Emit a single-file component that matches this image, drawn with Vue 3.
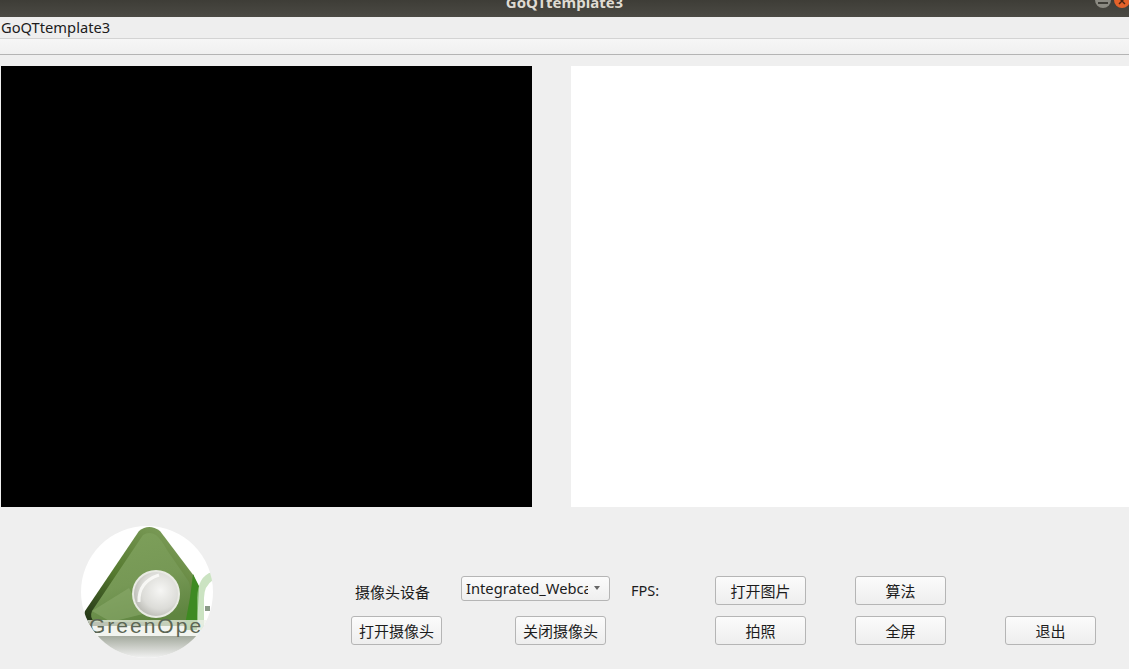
<script setup>
const cjk = '"Noto Sans", "Noto Sans CJK SC", sans-serif'
</script>

<template>
  <div class="window" :style="{ fontFamily: cjk }">
    <header class="titlebar">
      <span class="title">GoQTtemplate3</span>
      <div class="winbtns">
        <span class="winbtn min"><i></i></span>
        <span class="winbtn close">
          <svg width="16" height="16" viewBox="0 0 16 16"><path d="M5 6 L11 12 M11 6 L5 12" stroke="#4a2412" stroke-width="1.4" fill="none" /></svg>
        </span>
      </div>
    </header>
    <nav class="menubar"><span>GoQTtemplate3</span></nav>
    <div class="toolbar"></div>

    <section class="views">
      <div class="camera"></div>
      <div class="picture"></div>
    </section>

    <section class="bottom">
      <svg class="logo" width="132" height="132" viewBox="0 0 132 132">
        <defs>
          <clipPath id="circ"><circle cx="66" cy="66" r="66" /></clipPath>
          <linearGradient id="edge" x1="0.8" y1="0" x2="0" y2="1">
            <stop offset="0" stop-color="#7f9f5c" />
            <stop offset="0.55" stop-color="#55792f" />
            <stop offset="1" stop-color="#1f2f14" />
          </linearGradient>
          <linearGradient id="tri" x1="0.3" y1="0" x2="0.6" y2="1">
            <stop offset="0" stop-color="#7d9f5a" />
            <stop offset="0.55" stop-color="#769855" />
            <stop offset="1" stop-color="#5f8540" />
          </linearGradient>
          <linearGradient id="refl" x1="0" y1="0" x2="0" y2="1">
            <stop offset="0" stop-color="#a4aa9e" />
            <stop offset="1" stop-color="#f2f2f2" />
          </linearGradient>
          <radialGradient id="ball" cx="0.6" cy="0.42" r="0.65">
            <stop offset="0" stop-color="#f6f6f4" />
            <stop offset="0.65" stop-color="#dcdcd8" />
            <stop offset="1" stop-color="#b9b9b3" />
          </radialGradient>
        </defs>
        <g clip-path="url(#circ)">
          <rect width="132" height="132" fill="#fff" />
          <path d="M0 110 H125 V132 H0Z" fill="url(#refl)" />
          <path d="M58 5 Q68 -3 79 5 L113 50 L117 100 H8 Q1 94 4 85 Z" fill="url(#edge)" />
          <path d="M62 9 Q68 5 75 9 Q80 13 86 24 L108 56 Q110 62 109 70 L106 96 H14 Q8 92 11 85 Z" fill="url(#tri)" />
          <path d="M11 85 L48 62 L62 88 L30 96 Z" fill="#8dab6d" opacity="0.55" />
          <path d="M112 48 L118 60 L116 104 H103 L109 72 Z" fill="#3e8a22" />
          <path d="M131 46 Q117 50 116 72 L116 104 H123 L123 72 Q123 60 132 54 Z" fill="#a9d09a" opacity="0.6" />
          <rect x="124" y="80" width="5" height="5" fill="#8a9a88" />
          <circle cx="75" cy="68" r="24" fill="#e9ebe4" />
          <circle cx="75" cy="68" r="22" fill="url(#ball)" />
          <path d="M58 76 Q57 56 78 49" stroke="#fbfbf9" stroke-width="3" fill="none" opacity="0.85" />
          <rect x="0" y="94" width="126" height="16" fill="#eef0ea" opacity="0.75" />
          <text x="8" y="107" class="logotext">GreenOpe</text>
        </g>
      </svg>

      <div class="controls">
        <div class="row">
          <span class="label">摄像头设备</span>
          <div class="combo">
            <span class="combotext">Integrated_Webcam</span>
            <i class="arrow"></i>
          </div>
          <span class="fps">FPS:</span>
          <button class="btn first">打开图片</button>
          <button class="btn second">算法</button>
        </div>
        <div class="row lower">
          <button class="btn">打开摄像头</button>
          <button class="btn close-cam">关闭摄像头</button>
          <button class="btn shot">拍照</button>
          <button class="btn second">全屏</button>
          <button class="btn third">退出</button>
        </div>
      </div>
    </section>
  </div>
</template>

<style scoped>
.window {
  width: 1129px;
  height: 669px;
  overflow: hidden;
  background: #efefef;
  color: #1c1c1c;
  font-size: 15px;
}

.titlebar {
  position: relative;
  height: 17px;
  overflow: hidden;
  background: linear-gradient(#3e3d37, #4b4a44);
  text-align: center;
}

.title {
  display: block;
  line-height: 4px;
  font-size: 15px;
  font-weight: 700;
  color: #dfdbd2;
}

.winbtns {
  position: absolute;
  top: -8px;
  left: 1095px;
  display: flex;
  gap: 3px;
}

.winbtn {
  display: block;
  width: 16px;
  height: 16px;
  border-radius: 50%;
}

.winbtn.min {
  background: #8b8a82;
  position: relative;
}

.winbtn.min i {
  position: absolute;
  left: 3px;
  right: 3px;
  top: 10px;
  height: 2px;
  background: #3e3d37;
}

.winbtn.close {
  background: #e4622a;
}

.winbtn.close svg {
  display: block;
}

.menubar {
  height: 21px;
  line-height: 21px;
  padding-left: 1px;
  font-size: 14.7px;
  background: #eeeeee;
  border-bottom: 1px solid #d3d3d3;
}

.toolbar {
  height: 15px;
  background: linear-gradient(#f6f6f6, #f0f0f0);
  border-bottom: 1px solid #b4b4b4;
}

.views {
  display: flex;
  padding: 11px 0 0 1px;
  height: 441px;
}

.camera {
  width: 531px;
  background: #000;
}

.picture {
  width: 558px;
  margin-left: 39px;
  background: #fff;
}

.bottom {
  display: flex;
  padding: 19px 0 0 81px;
}

.logo {
  display: block;
  flex: none;
}

.logotext {
  font-family: "Liberation Sans", sans-serif;
  font-size: 21px;
  letter-spacing: 2px;
  fill: #5c6654;
}

.controls {
  margin-left: 138px;
  padding-top: 50px;
  display: flex;
  flex-direction: column;
  gap: 11px;
}

.row {
  display: flex;
  align-items: center;
  height: 29px;
}

.label {
  margin-left: 4px;
  width: 106px;
  margin-top: 1px;
}

.combo {
  display: flex;
  align-items: center;
  width: 149px;
  height: 25px;
  margin-top: -4px;
  padding: 0 8px 2px 4px;
  box-sizing: border-box;
  background: linear-gradient(#fbfbfb, #efefef);
  border: 1px solid #b5b5b5;
  border-radius: 3px;
}

.combotext {
  width: 122px;
  overflow: hidden;
  white-space: nowrap;
  font-size: 14.7px;
}

.arrow {
  margin-left: 6px;
  border-left: 3.5px solid transparent;
  border-right: 3.5px solid transparent;
  border-top: 4px solid #666;
}

.fps {
  margin-left: 21px;
  margin-top: -2px;
  width: 84px;
  font-size: 14.5px;
}

.btn {
  width: 91px;
  height: 29px;
  padding: 0;
  box-sizing: border-box;
  font: inherit;
  color: #1c1c1c;
  background: linear-gradient(#fbfbfb, #eeeeee);
  border: 1px solid #b5b5b5;
  border-radius: 3px;
}

.second {
  margin-left: 49px;
}

.third {
  margin-left: 59px;
}

.close-cam {
  margin-left: 73px;
}

.shot {
  margin-left: 109px;
}
</style>

<style>
html, body {
  background: #efefef;
}
</style>
